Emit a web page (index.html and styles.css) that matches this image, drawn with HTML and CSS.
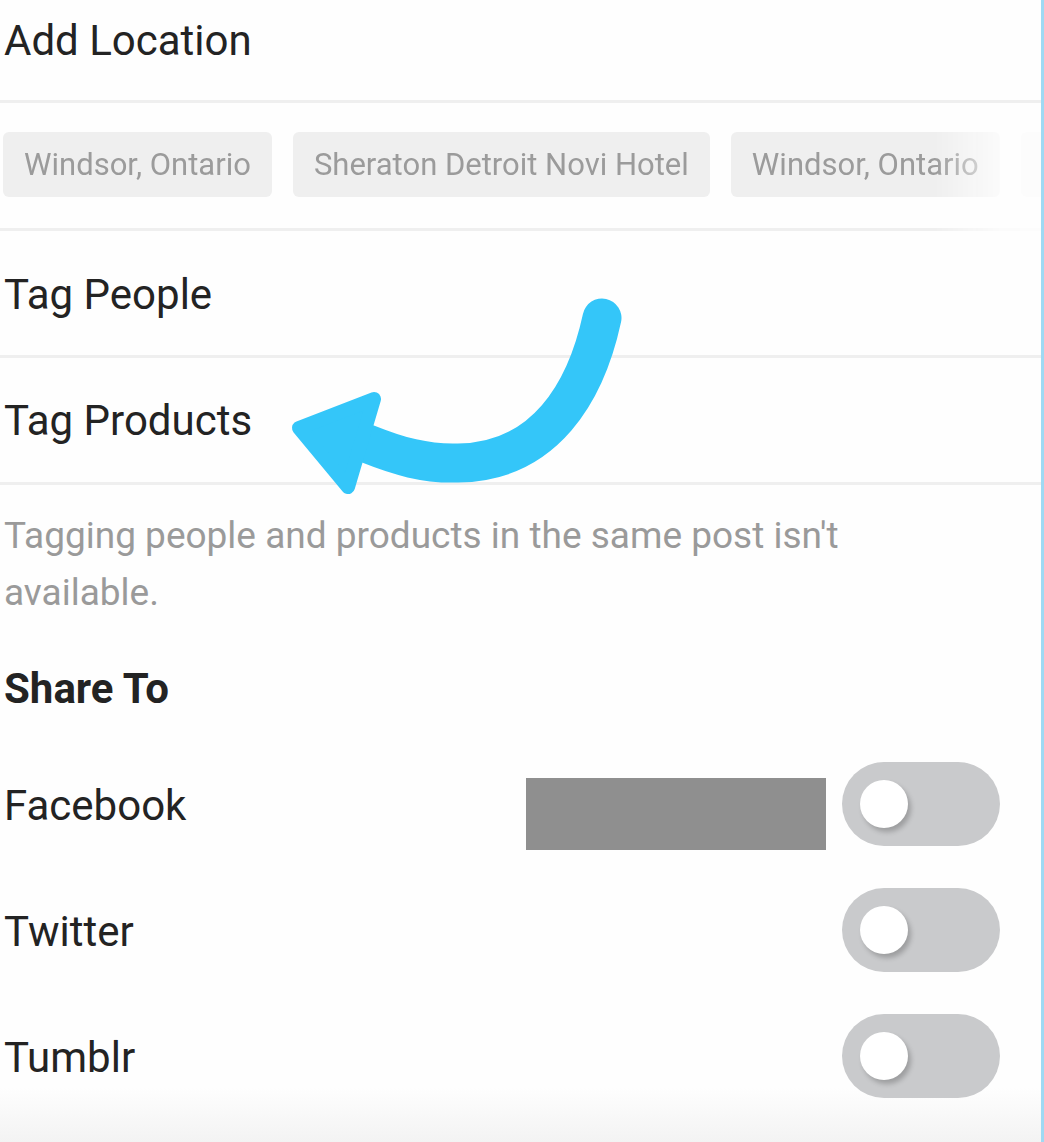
FILE: index.html
```html
<!DOCTYPE html>
<html lang="en">
<head>
    <meta charset="UTF-8">
    <meta name="viewport" content="width=device-width, initial-scale=1.0">
    <title>New Post - Share Options</title>
    <link rel="stylesheet" href="styles.css">
</head>
<body>

<div class="screen">
    <div class="row first">Add Location</div>

    <div class="chips">
        <span class="chip">Windsor, Ontario</span>
        <span class="chip">Sheraton Detroit Novi Hotel</span>
        <span class="chip">Windsor, Ontario</span>
        <span class="chip empty"></span>
    </div>

    <div class="row tag-people">Tag People</div>
    <div class="row tag-products">Tag Products</div>

    <p class="note">Tagging people and products in the same post isn't available.</p>

    <h3 class="share-title">Share To</h3>

    <div class="share-row">
        <span class="share-name">Facebook</span>
        <span class="redacted"></span>
        <span class="toggle"><span class="knob"></span></span>
    </div>
    <div class="share-row">
        <span class="share-name">Twitter</span>
        <span class="toggle"><span class="knob"></span></span>
    </div>
    <div class="share-row">
        <span class="share-name">Tumblr</span>
        <span class="toggle"><span class="knob"></span></span>
    </div>

    <!-- annotation arrow drawn over the screenshot -->
    <svg class="arrow" width="1044" height="1142" viewBox="0 0 1044 1142">
        <path d="M602 318 C586 392 545 462 458 463 C425 464 398 456 368 444" fill="none" stroke="#34c6f9" stroke-width="39" stroke-linecap="round"/>
        <polygon points="299,428 374,399 348,487" fill="#34c6f9" stroke="#34c6f9" stroke-width="14" stroke-linejoin="round"/>
    </svg>
</div>

</body>
</html>
```

FILE: styles.css
```css
html, body { margin: 0; padding: 0; }
body { font-family: Roboto, "Noto Sans", Arial, sans-serif; color: #232323; background: #fff; }

.screen {
    position: relative;
    width: 1041px;
    height: 1142px;
    overflow: hidden;
    border-right: 3px solid #9fd9f3;
    background: linear-gradient(to bottom, #fefefe 0, #fefefe 1088px, #f3f3f3 1142px);
}

.row { font-size: 42px; line-height: 50px; padding-left: 4px; border-bottom: 3px solid #efefef; }
.row.first { padding-top: 16px; padding-bottom: 34px; }
.row.tag-people { padding-top: 39px; padding-bottom: 35px; }
.row.tag-products { padding-top: 38px; padding-bottom: 36px; }

.chips {
    display: flex;
    gap: 21px;
    padding: 29px 0 31px 3px;
    border-bottom: 3px solid #efefef;
    white-space: nowrap;
    -webkit-mask-image: linear-gradient(to right, #000 0, #000 935px, rgba(0,0,0,0.2) 1000px, rgba(0,0,0,0.1) 1044px);
    mask-image: linear-gradient(to right, #000 0, #000 935px, rgba(0,0,0,0.2) 1000px, rgba(0,0,0,0.1) 1044px);
}
.chip {
    flex: none;
    height: 65px;
    line-height: 65px;
    padding: 0 21px;
    border-radius: 6px;
    background: #efefef;
    color: #9b9b9b;
    font-size: 31px;
}
.chip.empty { width: 200px; }

.note { margin: 0; padding: 22px 4px 0; font-size: 37px; line-height: 57px; color: #9a9a9a; width: 880px; }

.share-title { margin: 43px 0 27px; padding-left: 4px; font-size: 42px; line-height: 50px; font-weight: 700; }

.share-row { display: flex; align-items: center; height: 126px; padding-left: 4px; }
.share-name { flex: 1; font-size: 42px; line-height: 50px; margin-top: 4px; }
.redacted { align-self: flex-start; margin-top: 37px; margin-right: 16px; width: 300px; height: 72px; background: #8f8f8f; }
.toggle {
    position: relative;
    width: 158px;
    height: 84px;
    margin-right: 41px;
    border-radius: 42px;
    background: #c9cacc;
}
.knob {
    position: absolute;
    left: 18px;
    top: 18px;
    width: 48px;
    height: 48px;
    border-radius: 50%;
    background: #fff;
    box-shadow: 3px 4px 5px rgba(0,0,0,0.22);
}

.arrow { position: absolute; left: 0; top: 0; pointer-events: none; }
```
